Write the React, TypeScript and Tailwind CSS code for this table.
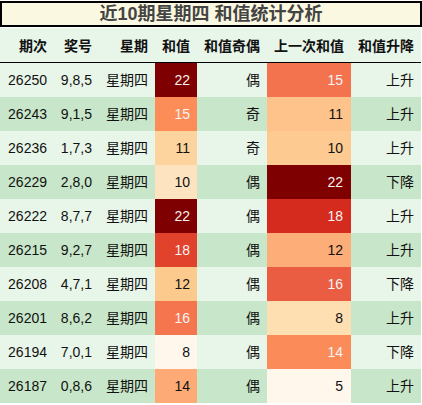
import React from "react";

type Row = {
    issue: string;
    nums: string;
    sum: number;
    sumColor: string;
    parity: string;
    prev: number;
    prevColor: string;
    trend: string;
};

// heat colours, picked per column (light -> dark red)
const rows: Row[] = [
    { issue: "26250", nums: "9,8,5", sum: 22, sumColor: "bg-[#7f0000]", parity: "偶", prev: 15, prevColor: "bg-[#f4734f]", trend: "上升" },
    { issue: "26243", nums: "9,1,5", sum: 15, sumColor: "bg-[#fc8d59]", parity: "奇", prev: 11, prevColor: "bg-[#fdc38a]", trend: "上升" },
    { issue: "26236", nums: "1,7,3", sum: 11, sumColor: "bg-[#fdd49e]", parity: "奇", prev: 10, prevColor: "bg-[#fdca92]", trend: "上升" },
    { issue: "26229", nums: "2,8,0", sum: 10, sumColor: "bg-[#fee3c0]", parity: "偶", prev: 22, prevColor: "bg-[#7f0000]", trend: "下降" },
    { issue: "26222", nums: "8,7,7", sum: 22, sumColor: "bg-[#7f0000]", parity: "偶", prev: 18, prevColor: "bg-[#d42b1e]", trend: "上升" },
    { issue: "26215", nums: "9,2,7", sum: 18, sumColor: "bg-[#e0422c]", parity: "偶", prev: 12, prevColor: "bg-[#fdad78]", trend: "上升" },
    { issue: "26208", nums: "4,7,1", sum: 12, sumColor: "bg-[#fdca8e]", parity: "偶", prev: 16, prevColor: "bg-[#ea5d43]", trend: "下降" },
    { issue: "26201", nums: "8,6,2", sum: 16, sumColor: "bg-[#f5754f]", parity: "偶", prev: 8, prevColor: "bg-[#fddfb2]", trend: "上升" },
    { issue: "26194", nums: "7,0,1", sum: 8, sumColor: "bg-[#fff7ec]", parity: "偶", prev: 14, prevColor: "bg-[#fc8b5a]", trend: "下降" },
    { issue: "26187", nums: "0,8,6", sum: 14, sumColor: "bg-[#fdaa76]", parity: "偶", prev: 5, prevColor: "bg-[#fff7ec]", trend: "上升" },
];

const whiteSum = [22, 15, 18, 16];
const whitePrev = [15, 22, 18, 16, 14];

const headers = ["期次", "奖号", "星期", "和值", "和值奇偶", "上一次和值", "和值升降"];

const cols = "grid grid-cols-[54px_45px_56px_42px_70px_84px_70px]";

const App = () => {
    return (
        <div
            className="w-[422px] h-[405px] bg-white pt-px overflow-hidden"
            style={{ fontFamily: '"Liberation Sans", "Noto Sans CJK SC", sans-serif' }}
        >
            <div className="h-[26px] border-2 border-black bg-[#faf8e0] flex items-center justify-center">
                <span className="text-[18px] font-bold text-[#444] leading-none">近10期星期四 和值统计分析</span>
            </div>
            <div className="w-[421px] mt-px">
                <div className={`${cols} h-[35px] bg-[#e8f5e9] border-b border-black text-[14px] font-bold text-[#111]`}>
                    {headers.map((h) => (
                        <div key={h} className="flex items-center justify-end pr-[7px] pt-[3px]">
                            {h}
                        </div>
                    ))}
                </div>
                {rows.map((r, i) => (
                    <div
                        key={r.issue}
                        className={`${cols} h-[34px] text-[14px] text-[#111] ${i % 2 === 0 ? "bg-[#e8f5e9]" : "bg-[#c8e6c9]"}`}
                    >
                        <div className="flex items-center justify-end pr-[7px]">{r.issue}</div>
                        <div className="flex items-center justify-end pr-[7px]">{r.nums}</div>
                        <div className="flex items-center justify-end pr-[7px]">星期四</div>
                        <div
                            className={`flex items-center justify-end pr-[7px] ${r.sumColor} ${whiteSum.includes(r.sum) ? "text-[#f4f4f4]" : ""}`}
                        >
                            {r.sum}
                        </div>
                        <div className="flex items-center justify-end pr-[7px]">{r.parity}</div>
                        <div
                            className={`flex items-center justify-end pr-[8px] ${r.prevColor} ${whitePrev.includes(r.prev) ? "text-[#f4f4f4]" : ""}`}
                        >
                            {r.prev}
                        </div>
                        <div className="flex items-center justify-end pr-[7px]">{r.trend}</div>
                    </div>
                ))}
            </div>
        </div>
    );
};

export default App;
